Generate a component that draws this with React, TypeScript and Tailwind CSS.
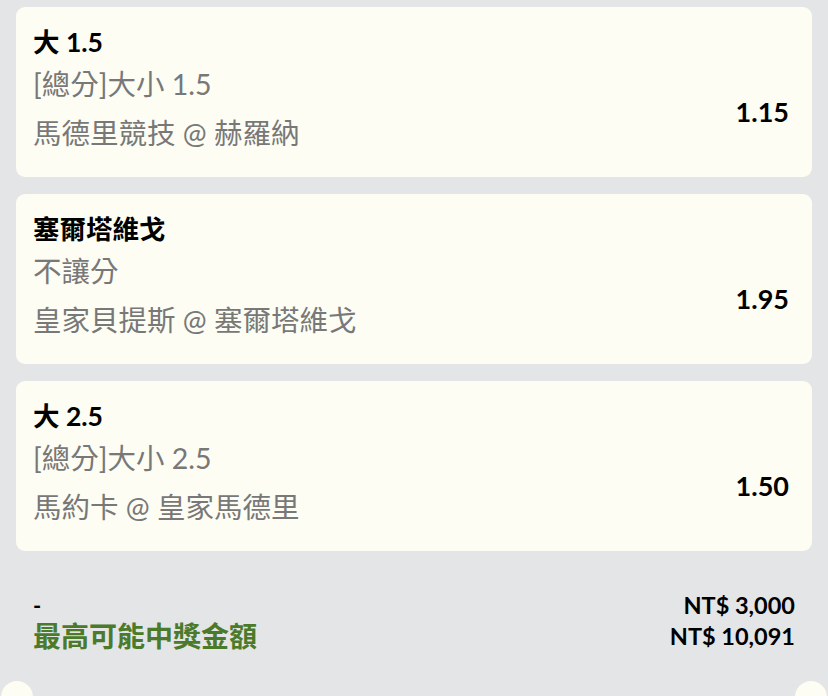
import React from "react";

const bets = [
  { title: "大 1.5", market: "[總分]大小 1.5", match: "馬德里競技 @ 赫羅納", odds: "1.15" },
  { title: "塞爾塔維戈", market: "不讓分", match: "皇家貝提斯 @ 塞爾塔維戈", odds: "1.95" },
  { title: "大 2.5", market: "[總分]大小 2.5", match: "馬約卡 @ 皇家馬德里", odds: "1.50" },
];

const font = { fontFamily: 'Lato, "Noto Sans CJK TC", sans-serif' };

export default function App() {
  return (
    <div
      className="relative w-[828px] h-[696px] overflow-hidden bg-[#e4e5e7]"
      style={font}
    >
      <div className="flex flex-col gap-[17px] px-4 pt-[7px]">
        {bets.map((b) => (
          <div
            key={b.title}
            className="flex h-[170px] rounded-[9px] bg-[#fdfdf3] pl-[17px] pr-[23px] pt-[17px]"
          >
            <div className="flex flex-1 flex-col">
              <div className="h-[36px] text-[26.5px] font-bold leading-[36px] text-black">
                {b.title}
              </div>
              <div className="h-[48px] text-[28.5px] leading-[49px] text-[#787878]">
                {b.market}
              </div>
              <div className="h-[48px] text-[28.5px] leading-[50px] text-[#787878]">
                {b.match}
              </div>
            </div>
            <div className="flex items-center pb-[20px] pt-[43px] text-[27px] font-bold text-black">
              {b.odds}
            </div>
          </div>
        ))}
      </div>
      <div className="flex justify-between pl-[33px] pr-[33px] pt-[39px]">
        <div className="flex flex-col">
          <div className="h-[31px] text-[22px] font-bold leading-[31px] text-black">-</div>
          <div className="h-[31px] text-[28px] font-bold leading-[31px] text-[#4b7a2a]">
            最高可能中獎金額
          </div>
        </div>
        <div className="flex flex-col items-end">
          <div className="h-[31px] text-[23.5px] font-bold leading-[31px] text-black">NT$ 3,000</div>
          <div className="h-[31px] text-[23.5px] font-bold leading-[31px] text-black">NT$ 10,091</div>
        </div>
      </div>
      <div className="absolute left-[1px] top-[681px] h-[32px] w-[32px] rounded-full bg-[#fdfdf3]" />
      <div className="absolute right-[1px] top-[681px] h-[32px] w-[32px] rounded-full bg-[#fdfdf3]" />
    </div>
  );
}
